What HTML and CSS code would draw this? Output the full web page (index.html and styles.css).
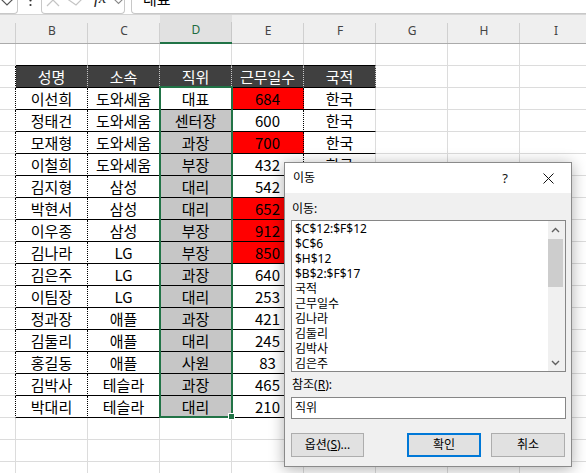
FILE: index.html
```html
<!DOCTYPE html>
<html lang="ko">
<head>
<meta charset="utf-8">
<title>이동</title>
<link rel="stylesheet" href="styles.css">
</head>
<body>
<div class="topbar">
  <div class="nbox"><svg width="17" height="13"><polyline points="1,-1 7,5 13,-1" fill="none" stroke="#555" stroke-width="1.2"/></svg></div>
  <div class="dots"><svg width="23" height="13"><circle cx="12.5" cy="0.5" r="1.1" fill="#333"/><circle cx="12.5" cy="5" r="1.1" fill="#333"/></svg></div>
  <div class="fbox"><svg width="82" height="13">
    <line x1="5" y1="6" x2="17" y2="-6" stroke="#c4c4c4" stroke-width="1.2"/>
    <line x1="17" y1="6" x2="5" y2="-6" stroke="#c4c4c4" stroke-width="1.2"/>
    <polyline points="24,-2 34,5 44,-5" fill="none" stroke="#c4c4c4" stroke-width="1.2"/>
    <text x="52" y="3" font-family="Liberation Serif" font-style="italic" font-size="17" fill="#222">fx</text>
    <polyline points="72,-1 76.5,3.5 81,-1" fill="none" stroke="#888" stroke-width="1.1"/>
  </svg></div>
  <div class="vbox"><span class="vtext">대표</span></div>
</div>

<div class="sheet">
  <div class="ch"></div><div class="ch">B</div><div class="ch">C</div><div class="ch chs">D</div><div class="ch">E</div><div class="ch">F</div><div class="ch">G</div><div class="ch">H</div><div class="ch">I</div>

  <div class="c"></div><div class="c t"></div><div class="c t"></div><div class="c t"></div><div class="c t"></div><div class="c t"></div><div class="c"></div><div class="c"></div><div class="c"></div>

  <div class="c ad"></div><div class="c th">성명</div><div class="c th">소속</div><div class="c th">직위</div><div class="c th">근무일수</div><div class="c th">국적</div><div class="c"></div><div class="c"></div><div class="c"></div>

  <div class="c ad"></div><div class="c t dr">이선희</div><div class="c t dr">도와세움</div><div class="c t">대표</div><div class="c t dr r">684</div><div class="c t">한국</div><div class="c"></div><div class="c"></div><div class="c"></div>
  <div class="c ad"></div><div class="c t dr">정태건</div><div class="c t dr">도와세움</div><div class="c t s">센터장</div><div class="c t dr">600</div><div class="c t">한국</div><div class="c"></div><div class="c"></div><div class="c"></div>
  <div class="c ad"></div><div class="c t dr">모재형</div><div class="c t dr">도와세움</div><div class="c t s">과장</div><div class="c t dr r">700</div><div class="c t">한국</div><div class="c"></div><div class="c"></div><div class="c"></div>
  <div class="c ad"></div><div class="c t dr">이철희</div><div class="c t dr">도와세움</div><div class="c t s">부장</div><div class="c t dr">432</div><div class="c t">한국</div><div class="c"></div><div class="c"></div><div class="c"></div>
  <div class="c ad"></div><div class="c t dr">김지형</div><div class="c t dr">삼성</div><div class="c t s">대리</div><div class="c t dr">542</div><div class="c t">한국</div><div class="c"></div><div class="c"></div><div class="c"></div>
  <div class="c ad"></div><div class="c t dr">박현서</div><div class="c t dr">삼성</div><div class="c t s">대리</div><div class="c t dr r">652</div><div class="c t">한국</div><div class="c"></div><div class="c"></div><div class="c"></div>
  <div class="c ad"></div><div class="c t dr">이우종</div><div class="c t dr">삼성</div><div class="c t s">부장</div><div class="c t dr r">912</div><div class="c t">한국</div><div class="c"></div><div class="c"></div><div class="c"></div>
  <div class="c ad"></div><div class="c t dr">김나라</div><div class="c t dr">LG</div><div class="c t s">부장</div><div class="c t dr r">850</div><div class="c t">한국</div><div class="c"></div><div class="c"></div><div class="c"></div>
  <div class="c ad"></div><div class="c t dr">김은주</div><div class="c t dr">LG</div><div class="c t s">과장</div><div class="c t dr">640</div><div class="c t">한국</div><div class="c"></div><div class="c"></div><div class="c"></div>
  <div class="c ad"></div><div class="c t dr">이팀장</div><div class="c t dr">LG</div><div class="c t s">대리</div><div class="c t dr">253</div><div class="c t">한국</div><div class="c"></div><div class="c"></div><div class="c"></div>
  <div class="c ad"></div><div class="c t dr">정과장</div><div class="c t dr">애플</div><div class="c t s">과장</div><div class="c t dr">421</div><div class="c t">미국</div><div class="c"></div><div class="c"></div><div class="c"></div>
  <div class="c ad"></div><div class="c t dr">김둘리</div><div class="c t dr">애플</div><div class="c t s">대리</div><div class="c t dr">245</div><div class="c t">미국</div><div class="c"></div><div class="c"></div><div class="c"></div>
  <div class="c ad"></div><div class="c t dr">홍길동</div><div class="c t dr">애플</div><div class="c t s">사원</div><div class="c t dr">83</div><div class="c t">미국</div><div class="c"></div><div class="c"></div><div class="c"></div>
  <div class="c ad"></div><div class="c t dr">김박사</div><div class="c t dr">테슬라</div><div class="c t s">과장</div><div class="c t dr">465</div><div class="c t">미국</div><div class="c"></div><div class="c"></div><div class="c"></div>
  <div class="c ad"></div><div class="c t dr">박대리</div><div class="c t dr">테슬라</div><div class="c t s">대리</div><div class="c t dr">210</div><div class="c t">미국</div><div class="c"></div><div class="c"></div><div class="c"></div>

  <div class="c"></div><div class="c"></div><div class="c"></div><div class="c"></div><div class="c"></div><div class="c"></div><div class="c"></div><div class="c"></div><div class="c"></div>
  <div class="c"></div><div class="c"></div><div class="c"></div><div class="c"></div><div class="c"></div><div class="c"></div><div class="c"></div><div class="c"></div><div class="c"></div>
  <div class="c"></div><div class="c"></div><div class="c"></div><div class="c"></div><div class="c"></div><div class="c"></div><div class="c"></div><div class="c"></div><div class="c"></div>

  <div class="selbox"><div class="handle"></div></div>
</div>

<div class="dlg">
  <div class="dtitle">
    <span class="dname">이동</span>
    <span class="qbtn">?</span>
    <span class="xbtn"><svg width="11" height="11"><line x1="0.5" y1="0.5" x2="10.5" y2="10.5" stroke="#111" stroke-width="1"/><line x1="10.5" y1="0.5" x2="0.5" y2="10.5" stroke="#111" stroke-width="1"/></svg></span>
  </div>
  <div class="dbody">
    <div class="lbl">이동:</div>
    <div class="list">
      <div class="items">
        <div>$C$12:$F$12</div>
        <div>$C$6</div>
        <div>$H$12</div>
        <div>$B$2:$F$17</div>
        <div>국적</div>
        <div>근무일수</div>
        <div>김나라</div>
        <div>김둘리</div>
        <div>김박사</div>
        <div>김은주</div>
      </div>
      <div class="sb">
        <div class="arr"><svg width="9" height="6"><polyline points="1,5 4.5,1.5 8,5" fill="none" stroke="#606060" stroke-width="1.4"/></svg></div>
        <div class="thumb"></div>
        <div class="track"></div>
        <div class="arr"><svg width="9" height="6"><polyline points="1,1 4.5,4.5 8,1" fill="none" stroke="#606060" stroke-width="1.4"/></svg></div>
      </div>
    </div>
    <div class="lbl lbl2">참조(<u>R</u>):</div>
    <div class="inp">직위</div>
    <div class="btns">
      <div class="btn">옵션(<u>S</u>)...</div>
      <div class="btn ok">확인</div>
      <div class="btn">취소</div>
    </div>
  </div>
</div>
</body>
</html>
```

FILE: styles.css
```css
* { box-sizing: border-box; margin: 0; padding: 0; }
html, body { width: 586px; height: 473px; overflow: hidden; background: #fff; }
body { position: relative; font-family: "Noto Sans CJK KR", sans-serif; color: #000; }

/* formula bar (cropped) */
.topbar { height: 14px; display: flex; overflow: hidden; background: #fff; }
.nbox { width: 18px; height: 14px; border-right: 1px solid #c8c8c8; border-bottom: 1px solid #c8c8c8; border-bottom-right-radius: 4px; }
.nbox svg, .dots svg, .fbox svg { display: block; }
.dots { width: 23px; }
.fbox { width: 84px; height: 14px; border: 1px solid #c8c8c8; border-top: none; border-radius: 0 0 4px 4px; }
.vbox { flex: 1; margin-left: 6px; height: 14px; border-left: 1px solid #c8c8c8; border-bottom: 1px solid #c8c8c8; border-bottom-left-radius: 4px; padding-left: 11px; overflow: hidden; }
.vtext { display: block; font-size: 15px; line-height: 15px; transform: translateY(-9px); }

/* sheet grid */
.sheet { position: relative; display: grid; grid-template-columns: 16px repeat(8, 72px); grid-template-rows: 30px; grid-auto-rows: 22px; }
.ch { border-top: 1px solid #d5d5d5; border-bottom: 1px solid #ababab;
  background: linear-gradient(#d0d0d0, #d0d0d0) right bottom / 1px 20px no-repeat, #efefef;
  font: 12px "Noto Sans", sans-serif; color: #444; display: flex; align-items: center; justify-content: center; padding-top: 2px; }
.chs { background: linear-gradient(#c8c8c8, #c8c8c8) right bottom / 1px 20px no-repeat, #e1e1e1; border-bottom: 2px solid #217346; color: #1d6b3e; }

.c { border-right: 1px solid #dcdcdc; border-bottom: 1px solid #dcdcdc; display: flex; align-items: center; justify-content: center; font-size: 15px; line-height: 20px; white-space: nowrap; overflow: hidden; }
.t { border-bottom-color: #000; }
.dr, .ad { border-right: 1px dotted #000; }
.th { background: #404040; color: #fff; border-bottom-color: #000; border-right: 1px dotted #c8c8c8; }
.s { background: #c6c6c6; }
.r { background: #ff0000; }

.selbox { position: absolute; left: 159px; top: 72px; width: 74px; height: 332px; border: 2px solid #217346; }
.handle { position: absolute; right: -3px; bottom: -3px; width: 5px; height: 5px; background: #217346; outline: 1px solid #fff; }

/* dialog */
.dlg { position: absolute; left: 284px; top: 162px; width: 288px; border: 1px solid #8a8a8a; background: #f0f0f0;
  box-shadow: 0 2px 14px rgba(0, 0, 0, 0.32); font-family: "Noto Sans", "Noto Sans CJK KR", sans-serif; font-size: 12px; }
.dtitle { height: 30px; background: #fff; display: flex; align-items: center; padding-left: 8px; }
.dname { flex: 1; line-height: 16px; }
.qbtn { width: 42px; text-align: center; font-size: 13px; line-height: 16px; color: #111; }
.xbtn { width: 45px; display: flex; justify-content: center; }
.xbtn svg { display: block; }
.dbody { padding: 8px 5px 9px 6px; display: flex; flex-direction: column; }
.lbl { line-height: 16px; padding-left: 1px; height: 16px; }
.lbl2 { margin-top: 5px; }
.list { margin-top: 3px; height: 152px; border: 1px solid #868686; background: #fff; display: flex; }
.items { flex: 1; padding-left: 3px; line-height: 15px; white-space: nowrap; overflow: hidden; }
.sb { width: 17px; padding-right: 2px; background: #f0f0f0; display: flex; flex-direction: column; }
.arr { height: 17px; display: flex; align-items: center; justify-content: center; }
.arr svg { display: block; }
.thumb { margin-top: 1px; height: 48px; background: #cdcdcd; }
.track { flex: 1; }
.inp { margin-top: 4px; height: 22px; border: 1px solid #868686; background: #fff; padding-left: 3px; line-height: 20px; }
.btns { margin-top: 14px; height: 24px; display: flex; gap: 10px; padding-right: 1px; }
.btn { width: 73px; height: 24px; background: #e1e1e1; border: 1px solid #adadad; display: flex; align-items: center; justify-content: center; line-height: 16px; }
.btn.ok { margin-left: auto; width: 74px; border: 2px solid #0078d7; }
.btns .btn:last-child { width: 74px; }
```
